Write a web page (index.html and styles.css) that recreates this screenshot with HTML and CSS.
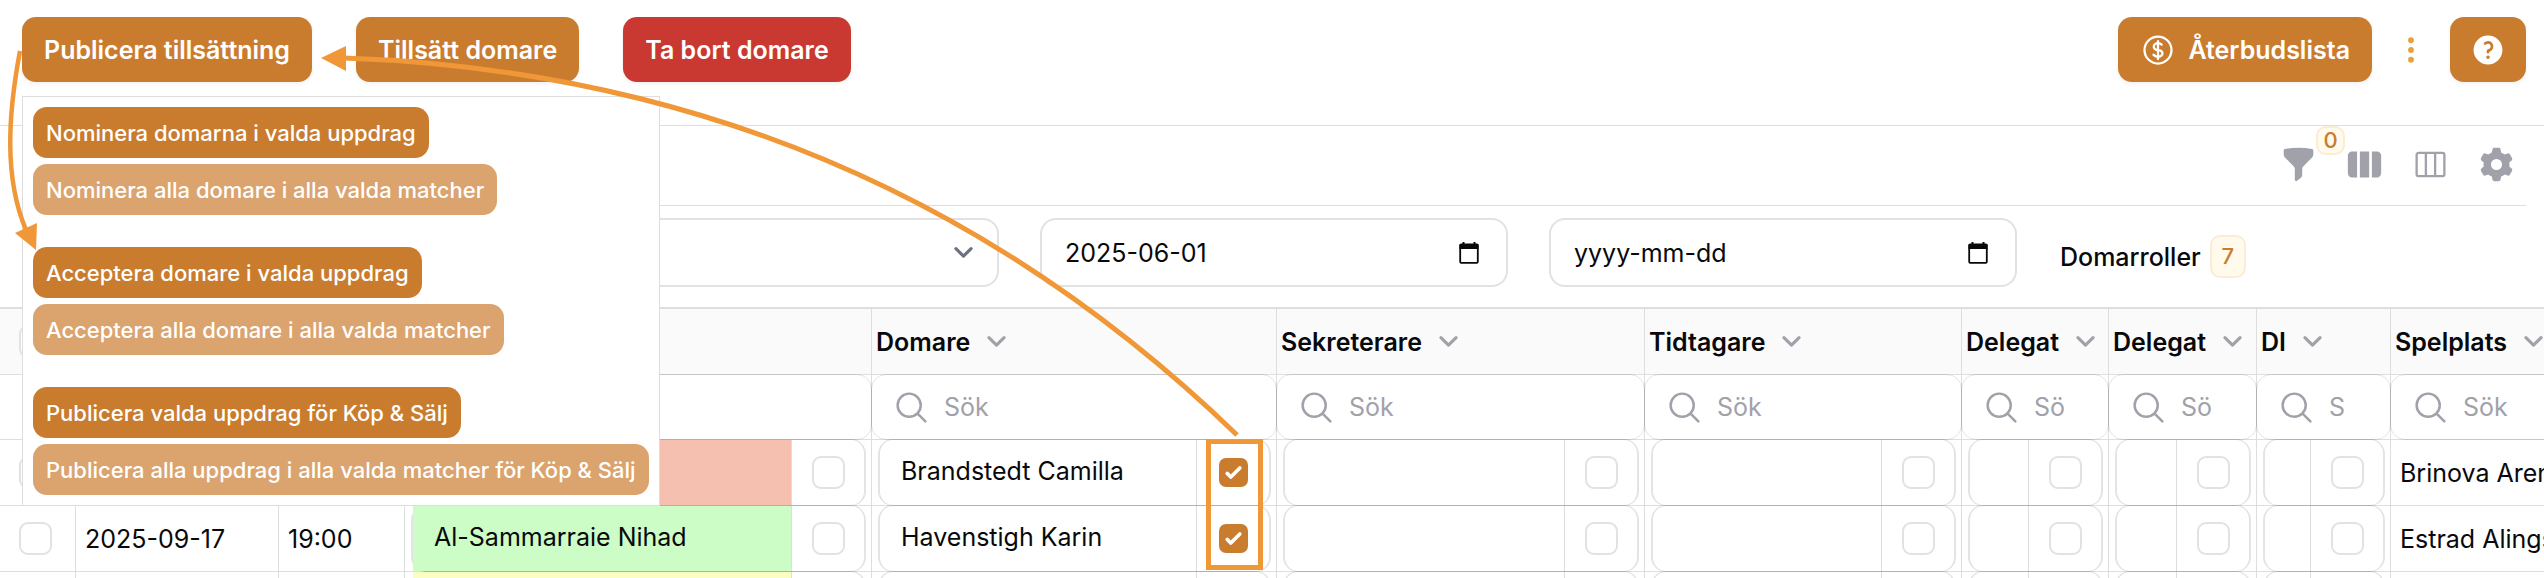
FILE: index.html
```html
<!DOCTYPE html>
<html lang="sv">
<head>
<meta charset="utf-8">
<title>Domartillsättning</title>
<link rel="stylesheet" href="styles.css">
</head>
<body>
<svg class="sprite" aria-hidden="true">
  <symbol id="chevron" viewBox="0 0 20 20"><path d="M5.9 7.9 10 12l4.1-4.1" fill="none" stroke="currentColor" stroke-width="1.7" stroke-linecap="round" stroke-linejoin="round"/></symbol>
  <symbol id="search" viewBox="0 0 24 24"><path d="m21 21-5.197-5.197m0 0A7.5 7.5 0 1 0 5.196 5.196a7.5 7.5 0 0 0 10.607 10.607Z" fill="none" stroke="currentColor" stroke-width="1.6" stroke-linecap="round"/></symbol>
  <symbol id="calendar" viewBox="0 0 20 22"><path d="M1.2 3.5h17.6v16.3a1 1 0 0 1-1 1H2.200a1 1 0 0 1-1-1Z" fill="none" stroke="currentColor" stroke-width="1.8"/><path d="M.5 3a1.500 1.500 0 0 1 1.500-1.500h1.500V0h2v1.500h9V0h2v1.500H18A1.500 1.500 0 0 1 19.500 3v4H.5Z" fill="currentColor"/></symbol>
</svg>

<header class="topbar">
  <div class="actions">
    <button type="button" class="btn">Publicera tillsättning</button>
    <button type="button" class="btn">Tillsätt domare</button>
    <button type="button" class="btn btn-danger">Ta bort domare</button>
  </div>
  <div class="actions-end">
    <button type="button" class="btn btn-icon-text">
      <svg class="icon" viewBox="0 0 24 24" fill="none" stroke="currentColor" stroke-width="1.5" stroke-linecap="round" stroke-linejoin="round"><path d="M12 6v12m-3-2.818.879.659c1.171.879 3.07.879 4.242 0 1.172-.879 1.172-2.303 0-3.182C13.536 12.219 12.768 12 12 12c-.725 0-1.450-.22-2.003-.659-1.106-.879-1.106-2.303 0-3.182s2.900-.879 4.006 0l.415.33M21 12a9 9 0 1 1-18 0 9 9 0 0 1 18 0Z"/></svg>
      Återbudslista
    </button>
    <button type="button" class="more" aria-label="Mer">
      <svg class="icon" viewBox="0 0 37 37" fill="currentColor"><circle cx="18.500" cy="8.500" r="3"/><circle cx="18.500" cy="18.500" r="3"/><circle cx="18.500" cy="28.500" r="3"/></svg>
    </button>
    <button type="button" class="btn btn-help" aria-label="Hjälp">
      <svg class="icon" viewBox="0 0 20 20" fill="currentColor" fill-rule="evenodd"><path d="M18 10a8 8 0 1 1-16 0 8 8 0 0 1 16 0ZM8.940 6.940a.75.75 0 1 1-1.061-1.061 3 3 0 1 1 2.871 5.026v.345a.75.75 0 0 1-1.500 0v-.5c0-.72.57-1.172 1.081-1.287A1.500 1.500 0 1 0 8.940 6.940ZM10 15a1 1 0 1 0 0-2 1 1 0 0 0 0 2Z"/></svg>
    </button>
  </div>
</header>

<div class="toolbar">
  <button type="button" class="tool" aria-label="Filter">
    <svg class="icon" viewBox="0 0 20 20" fill="currentColor"><path d="M2.628 1.601C5.028 1.206 7.490 1 10 1s4.973.206 7.372.601a.75.75 0 0 1 .628.74v2.288a2.250 2.250 0 0 1-.659 1.590l-4.682 4.683a2.250 2.250 0 0 0-.659 1.590v3.037c0 .684-.31 1.330-.844 1.757l-1.937 1.550A.75.75 0 0 1 8 18.250v-5.757a2.250 2.250 0 0 0-.659-1.591L2.659 6.220A2.250 2.250 0 0 1 2 4.629V2.340a.75.75 0 0 1 .628-.74Z"/></svg>
    <span class="count">0</span>
  </button>
  <button type="button" class="tool" aria-label="Kolumner">
    <svg class="icon" viewBox="0 0 20 20" fill="currentColor"><path d="M14 17h2.750A2.250 2.250 0 0 0 19 14.750v-9.500A2.250 2.250 0 0 0 16.750 3H14v14ZM12.500 3h-5v14h5V3ZM3.250 3H6v14H3.250A2.250 2.250 0 0 1 1 14.750v-9.500A2.250 2.250 0 0 1 3.250 3Z"/></svg>
  </button>
  <button type="button" class="tool" aria-label="Kolumnvy">
    <svg class="icon" viewBox="0 0 24 24" fill="none" stroke="currentColor" stroke-width="1.5"><path d="M9 4.500v15m6-15v15m-10.875 0h15.750c.621 0 1.125-.504 1.125-1.125V5.625c0-.621-.504-1.125-1.125-1.125H4.125C3.504 4.500 3 5.004 3 5.625v12.750c0 .621.504 1.125 1.125 1.125Z"/></svg>
  </button>
  <button type="button" class="tool" aria-label="Inställningar">
    <svg class="icon" viewBox="0 0 20 20" fill="currentColor" fill-rule="evenodd"><path d="M7.840 1.804A1 1 0 0 1 8.820 1h2.360a1 1 0 0 1 .98.804l.331 1.652a6.993 6.993 0 0 1 1.929 1.115l1.598-.54a1 1 0 0 1 1.186.447l1.180 2.044a1 1 0 0 1-.205 1.251l-1.267 1.113a7.047 7.047 0 0 1 0 2.228l1.267 1.113a1 1 0 0 1 .206 1.250l-1.180 2.045a1 1 0 0 1-1.187.447l-1.598-.54a6.993 6.993 0 0 1-1.929 1.115l-.33 1.652a1 1 0 0 1-.98.804H8.820a1 1 0 0 1-.98-.804l-.331-1.652a6.993 6.993 0 0 1-1.929-1.115l-1.598.54a1 1 0 0 1-1.186-.447l-1.180-2.044a1 1 0 0 1 .205-1.251l1.267-1.114a7.050 7.050 0 0 1 0-2.227L1.821 7.773a1 1 0 0 1-.206-1.250l1.180-2.045a1 1 0 0 1 1.187-.447l1.598.54A6.992 6.992 0 0 1 7.510 3.456l.33-1.652ZM10 13a3 3 0 1 0 0-6 3 3 0 0 0 0 6Z"/></svg>
  </button>
</div>

<div class="filters">
  <div class="field"><select aria-label="Tävling"></select><svg class="field-chevron"><use href="#chevron"/></svg></div>
  <div class="field"><select aria-label="Förening"></select><svg class="field-chevron"><use href="#chevron"/></svg></div>
  <div class="field"><input type="text" aria-label="Från datum" value="2025-06-01"><svg class="field-date"><use href="#calendar"/></svg></div>
  <div class="field"><input type="text" aria-label="Till datum" placeholder="yyyy-mm-dd"><svg class="field-date"><use href="#calendar"/></svg></div>
  <div class="roles">Domarroller <span class="badge">7</span></div>
</div>

<div class="grid">
<table>
  <colgroup><col class="c-check"><col class="c-date"><col class="c-time"><col class="c-main"><col class="c-ref"><col class="c-sec"><col class="c-timer"><col class="c-del1"><col class="c-del2"><col class="c-di"><col class="c-place"></colgroup>
  <thead>
    <tr class="heads">
      <th><input type="checkbox" class="check" aria-label="Välj alla"></th>
      <th></th><th></th><th></th>
      <th><span class="head">Domare <svg><use href="#chevron"/></svg></span></th>
      <th><span class="head">Sekreterare <svg><use href="#chevron"/></svg></span></th>
      <th><span class="head">Tidtagare <svg><use href="#chevron"/></svg></span></th>
      <th><span class="head">Delegat <svg><use href="#chevron"/></svg></span></th>
      <th><span class="head">Delegat <svg><use href="#chevron"/></svg></span></th>
      <th><span class="head">DI <svg><use href="#chevron"/></svg></span></th>
      <th><span class="head">Spelplats <svg><use href="#chevron"/></svg></span></th>
    </tr>
    <tr class="searches">
      <td></td><td></td><td></td>
      <td><div class="search"></div></td>
      <td><div class="search"><svg><use href="#search"/></svg><input type="text" placeholder="Sök" aria-label="Sök domare"></div></td>
      <td><div class="search"><svg><use href="#search"/></svg><input type="text" placeholder="Sök" aria-label="Sök sekreterare"></div></td>
      <td><div class="search"><svg><use href="#search"/></svg><input type="text" placeholder="Sök" aria-label="Sök tidtagare"></div></td>
      <td><div class="search"><svg><use href="#search"/></svg><input type="text" placeholder="Sök" aria-label="Sök delegat 1"></div></td>
      <td><div class="search"><svg><use href="#search"/></svg><input type="text" placeholder="Sök" aria-label="Sök delegat 2"></div></td>
      <td><div class="search"><svg><use href="#search"/></svg><input type="text" placeholder="Sök" aria-label="Sök DI"></div></td>
      <td><div class="search"><svg><use href="#search"/></svg><input type="text" placeholder="Sök" aria-label="Sök spelplats"></div></td>
    </tr>
  </thead>
  <tbody>
    <tr>
      <td><input type="checkbox" class="check" aria-label="Välj match 1"></td>
      <td></td><td></td>
      <td><div class="slot"><span class="name declined"></span><label class="pick"><input type="checkbox" class="check" aria-label="Välj"></label></div></td>
      <td><div class="slot"><span class="name">Brandstedt Camilla</span><label class="pick"><input type="checkbox" class="check" aria-label="Välj Brandstedt Camilla" checked></label></div></td>
      <td><div class="slot"><span class="name"></span><label class="pick"><input type="checkbox" class="check" aria-label="Välj"></label></div></td>
      <td><div class="slot"><span class="name"></span><label class="pick"><input type="checkbox" class="check" aria-label="Välj"></label></div></td>
      <td><div class="slot"><span class="name"></span><label class="pick"><input type="checkbox" class="check" aria-label="Välj"></label></div></td>
      <td><div class="slot"><span class="name"></span><label class="pick"><input type="checkbox" class="check" aria-label="Välj"></label></div></td>
      <td><div class="slot"><span class="name"></span><label class="pick"><input type="checkbox" class="check" aria-label="Välj"></label></div></td>
      <td class="text">Brinova Arena</td>
    </tr>
    <tr>
      <td><input type="checkbox" class="check" aria-label="Välj match 2"></td>
      <td class="text">2025-09-17</td><td class="text">19:00</td>
      <td><div class="slot"><span class="name accepted">Al-Sammarraie Nihad</span><label class="pick"><input type="checkbox" class="check" aria-label="Välj Al-Sammarraie Nihad"></label></div></td>
      <td><div class="slot"><span class="name">Havenstigh Karin</span><label class="pick"><input type="checkbox" class="check" aria-label="Välj Havenstigh Karin" checked></label></div></td>
      <td><div class="slot"><span class="name"></span><label class="pick"><input type="checkbox" class="check" aria-label="Välj"></label></div></td>
      <td><div class="slot"><span class="name"></span><label class="pick"><input type="checkbox" class="check" aria-label="Välj"></label></div></td>
      <td><div class="slot"><span class="name"></span><label class="pick"><input type="checkbox" class="check" aria-label="Välj"></label></div></td>
      <td><div class="slot"><span class="name"></span><label class="pick"><input type="checkbox" class="check" aria-label="Välj"></label></div></td>
      <td><div class="slot"><span class="name"></span><label class="pick"><input type="checkbox" class="check" aria-label="Välj"></label></div></td>
      <td class="text">Estrad Alingsås</td>
    </tr>
    <tr>
      <td></td><td></td><td></td>
      <td><div class="slot"><span class="name pending"></span><span class="pick"></span></div></td>
      <td><div class="slot"><span class="name"></span><span class="pick"></span></div></td>
      <td><div class="slot"><span class="name"></span><span class="pick"></span></div></td>
      <td><div class="slot"><span class="name"></span><span class="pick"></span></div></td>
      <td><div class="slot"><span class="name"></span><span class="pick"></span></div></td>
      <td><div class="slot"><span class="name"></span><span class="pick"></span></div></td>
      <td><div class="slot"><span class="name"></span><span class="pick"></span></div></td>
      <td></td>
    </tr>
  </tbody>
</table>
</div>

<div class="menu">
  <div class="menu-group">
    <button type="button" class="item">Nominera domarna i valda uppdrag</button>
    <button type="button" class="item" disabled>Nominera alla domare i alla valda matcher</button>
  </div>
  <div class="menu-group">
    <button type="button" class="item">Acceptera domare i valda uppdrag</button>
    <button type="button" class="item" disabled>Acceptera alla domare i alla valda matcher</button>
  </div>
  <div class="menu-group">
    <button type="button" class="item">Publicera valda uppdrag för Köp &amp; Sälj</button>
    <button type="button" class="item" disabled>Publicera alla uppdrag i alla valda matcher för Köp &amp; Sälj</button>
  </div>
</div>

<svg class="notes" aria-hidden="true">
  <g fill="none" stroke="#f09837">
    <path stroke-width="4.500" d="M20 51C8 115 4 178 26 230"/>
    <path stroke-width="5" d="M344 58Q866 76 1237 435"/>
    <rect stroke-width="5" x="1208.500" y="441.500" width="52" height="126"/>
  </g>
  <path fill="#f09837" d="M36 250 15 233 37 223ZM321 58l25-12v25Z"/>
</svg>
</body>
</html>
```
FILE: styles.css
```css
:root {
  --brand: #ca7c2e;
  --ink: #09090b;
  --muted: #a1a1aa;
  --line: #dedede;
  --ring: rgba(9, 9, 11, 0.11);
}

* { box-sizing: border-box; }

body {
  margin: 0;
  height: 100vh;
  display: flex;
  flex-direction: column;
  overflow: hidden;
  position: relative;
  background: #fff;
  color: var(--ink);
  font: 400 25px/36px Inter, sans-serif;
}

button, input, select { font: inherit; color: inherit; margin: 0; }
button { border: 0; background: none; padding: 0; }
svg { flex: none; }
.sprite { display: none; }
.icon { display: block; width: 37px; height: 37px; }

/* Top bar */
.topbar {
  display: flex;
  justify-content: space-between;
  padding: 17px 18px 43px 22px;
  border-bottom: 1px solid var(--line);
}
.actions { display: flex; gap: 44px; }
.actions-end { display: flex; align-items: center; }
.btn {
  height: 65px;
  padding: 0 22px;
  border-radius: 14px;
  background: var(--brand);
  color: #fff;
  font-weight: 600;
  box-shadow: 0 2px 4px rgba(0, 0, 0, 0.06);
}
.btn-danger { background: #c93831; }
.btn-icon-text { display: flex; align-items: center; gap: 12px; }
.more { color: #e9a23b; margin: 0 21px; }
.btn-help { width: 76px; padding: 0 20px; }
.actions-end .icon { width: 36px; height: 36px; }

/* Toolbar */
.toolbar {
  display: flex;
  justify-content: flex-end;
  gap: 29px;
  margin: 0 18px 0 22px;
  padding: 20px 11px 22px;
  border-bottom: 1px solid var(--line);
  color: var(--muted);
}
.tool { position: relative; }
.count, .badge {
  background: #fffaeb;
  border: 2px solid #faecd6;
  border-radius: 10px;
  color: var(--brand);
  text-align: center;
  font-weight: 500;
}
.count {
  position: absolute;
  left: 36px;
  top: -20px;
  width: 29px;
  font-size: 22px;
  line-height: 25px;
}

/* Filters */
.filters {
  display: grid;
  grid-template-columns: repeat(5, 1fr);
  gap: 41px;
  padding: 12px 18px 20px 22px;
}
.field {
  display: flex;
  align-items: center;
  height: 69px;
  padding: 0 25px 0 23px;
  border: 2px solid #e2e2e3;
  border-radius: 16px;
}
.field input, .field select {
  flex: 1;
  min-width: 0;
  padding: 0;
  border: 0;
  outline: 0;
  background: none;
  appearance: none;
}
.field input::placeholder { color: var(--ink); opacity: 1; }
.field-chevron { width: 37px; height: 37px; margin-right: -10px; color: #6b7280; }
.field-date { width: 20px; height: 22px; margin-right: 2px; }
.roles {
  display: flex;
  align-items: center;
  gap: 9px;
  padding: 8px 2px 0;
  font-weight: 500;
}
.badge { width: 36px; font-size: 22px; line-height: 39px; }

/* Match table */
.grid { flex: 1; min-height: 0; overflow: hidden; border-top: 2px solid var(--line); }
table { table-layout: fixed; width: 2560px; min-width: 100%; border-collapse: separate; border-spacing: 0; }
.c-check { width: 76px; }
.c-date { width: 203px; }
.c-time { width: 126px; }
.c-main { width: 467px; }
.c-ref { width: 405px; }
.c-sec { width: 368px; }
.c-timer { width: 317px; }
.c-del1 { width: 147px; }
.c-del2 { width: 148px; }
.c-di { width: 134px; }
th, td {
  height: 66px;
  padding: 0;
  border-right: 1px solid var(--line);
  border-bottom: 1px solid var(--line);
  text-align: left;
  white-space: nowrap;
}
th { background: #fafafa; font-weight: 600; }
.searches td { height: 65px; }
th:first-child, td:first-child { padding-left: 19px; }
.head { display: flex; align-items: center; gap: 8px; padding-left: 4px; }
.head svg { width: 37px; height: 37px; color: var(--muted); }
.text { padding-left: 9px; }

.search {
  display: flex;
  align-items: center;
  gap: 14px;
  height: 66px;
  margin: -1px;
  padding: 0 44px 0 21px;
  border: 1px solid var(--ring);
  border-radius: 15px;
}
.search svg { width: 37px; height: 37px; color: var(--muted); }
.search input {
  flex: 1;
  width: 0;
  min-width: 0;
  padding: 0;
  border: 0;
  outline: 0;
  background: none;
}
.search input::placeholder { color: var(--muted); opacity: 1; }

.slot {
  display: flex;
  height: 67px;
  margin: -1px 5px -1px 6px;
  border: solid var(--ring);
  border-width: 1px 2px;
  border-radius: 15px;
}
.name { flex: 1; min-width: 0; padding-left: 21px; line-height: 63px; }
.declined { background: #f5c0af; }
.accepted { background: #cdfdc6; }
.pending { background: #fafec2; }
.pick {
  flex: none;
  display: flex;
  align-items: center;
  justify-content: center;
  width: 73px;
  border-left: 1px solid var(--line);
}

.check {
  appearance: none;
  display: block;
  width: 33px;
  height: 33px;
  border: 2px solid #e2e2e3;
  border-radius: 9px;
  background: #fff;
}
.check:checked {
  width: 29px;
  height: 29px;
  border: 0;
  border-radius: 7px;
  background: var(--brand) url("data:image/svg+xml,%3Csvg xmlns='http://www.w3.org/2000/svg' viewBox='0 0 16 16'%3E%3Cpath fill='%23fff' d='M12.207 4.793a1 1 0 0 1 0 1.414l-5 5a1 1 0 0 1-1.414 0l-2-2a1 1 0 0 1 1.414-1.414L6.500 9.086l4.293-4.293a1 1 0 0 1 1.414 0Z'/%3E%3C/svg%3E") center / 29px;
}

/* Publish menu, over the table */
.menu {
  position: absolute;
  left: 22px;
  top: 96px;
  display: flex;
  flex-direction: column;
  gap: 32px;
  padding: 10px;
  border: 1px solid var(--line);
  background: #fff;
}
.menu-group { display: flex; flex-direction: column; align-items: flex-start; gap: 6px; }
.item {
  height: 51px;
  padding: 0 13px;
  border-radius: 14px;
  background: var(--brand);
  color: #fff;
  font-size: 22px;
  font-weight: 500;
  white-space: nowrap;
}
.item:disabled { background: #dba36e; }

/* Guide arrows and highlight */
.notes {
  position: absolute;
  inset: 0;
  width: 100%;
  height: 100%;
  pointer-events: none;
}
```
